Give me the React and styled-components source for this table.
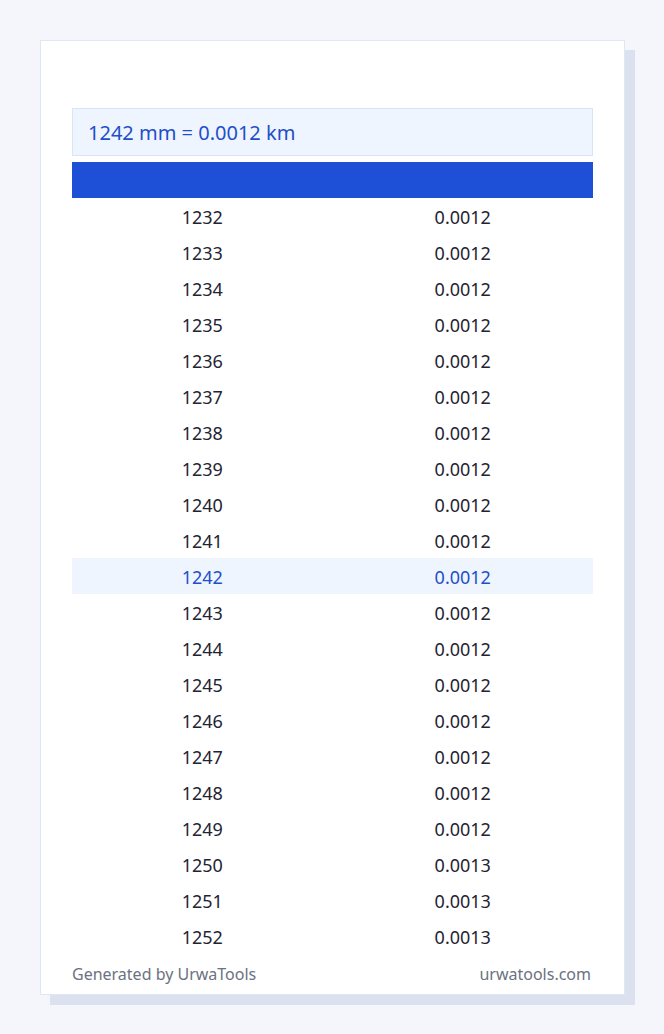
import React from 'react';
import styled, { createGlobalStyle } from 'styled-components';

const GlobalStyle = createGlobalStyle`
  html, body {
    margin: 0;
    padding: 0;
    background: #f4f6fb;
  }
  body {
    font-family: "Noto Sans", "Open Sans", sans-serif;
  }
`;

const Page = styled.div`
  padding: 40px 39px 30px 40px;
`,
      Card = styled.section`
        background: #fff;
        border: 1px solid #dfe6f6;
        box-shadow: 10px 10px 0 #dbe1ee;
        padding: 67px 31px 0;
        width: 521px;
      `,
      Result = styled.div`
        background: #eef5ff;
        border: 1px solid #d9e5f7;
        color: #1e4fc9;
        font-size: 20px;
        height: 46px;
        line-height: 48px;
        padding: 0 15px;
        margin-bottom: 6px;
      `,
      Table = styled.table`
        border-collapse: collapse;
        width: 100%;
        table-layout: fixed;
      `,
      HeadCell = styled.th`
        background: #1d4fd7;
        height: 36px;
        padding: 0;
      `,
      Row = styled.tr`
        background: ${p => (p.$active ? '#eef5ff' : 'transparent')};
        color: ${p => (p.$active ? '#1e4fc9' : '#1f2433')};
      `,
      Cell = styled.td`
        height: 36px;
        padding: 2px 0 0;
        box-sizing: border-box;
        text-align: center;
        font-size: 18px;
        line-height: 34px;
      `,
      Footer = styled.footer`
        display: flex;
        justify-content: space-between;
        align-items: center;
        height: 40px;
        padding: 0 2px 0 0;
        color: #6b7280;
        font-size: 16px;
      `;

const rows = Array.from({ length: 21 }, (_, i) => {
  const mm = 1232 + i;
  return { mm, km: (mm / 1000000).toFixed(4) };
});

const App = () => (
  <Page>
    <GlobalStyle />
    <Card>
      <Result>1242 mm = 0.0012 km</Result>
      <Table>
        <thead>
          <tr>
            <HeadCell />
            <HeadCell />
          </tr>
        </thead>
        <tbody>
          {rows.map(r => (
            <Row key={r.mm} $active={r.mm === 1242}>
              <Cell>{r.mm}</Cell>
              <Cell>{r.km}</Cell>
            </Row>
          ))}
        </tbody>
      </Table>
      <Footer>
        <span>Generated by UrwaTools</span>
        <span>urwatools.com</span>
      </Footer>
    </Card>
  </Page>
);

export default App;
